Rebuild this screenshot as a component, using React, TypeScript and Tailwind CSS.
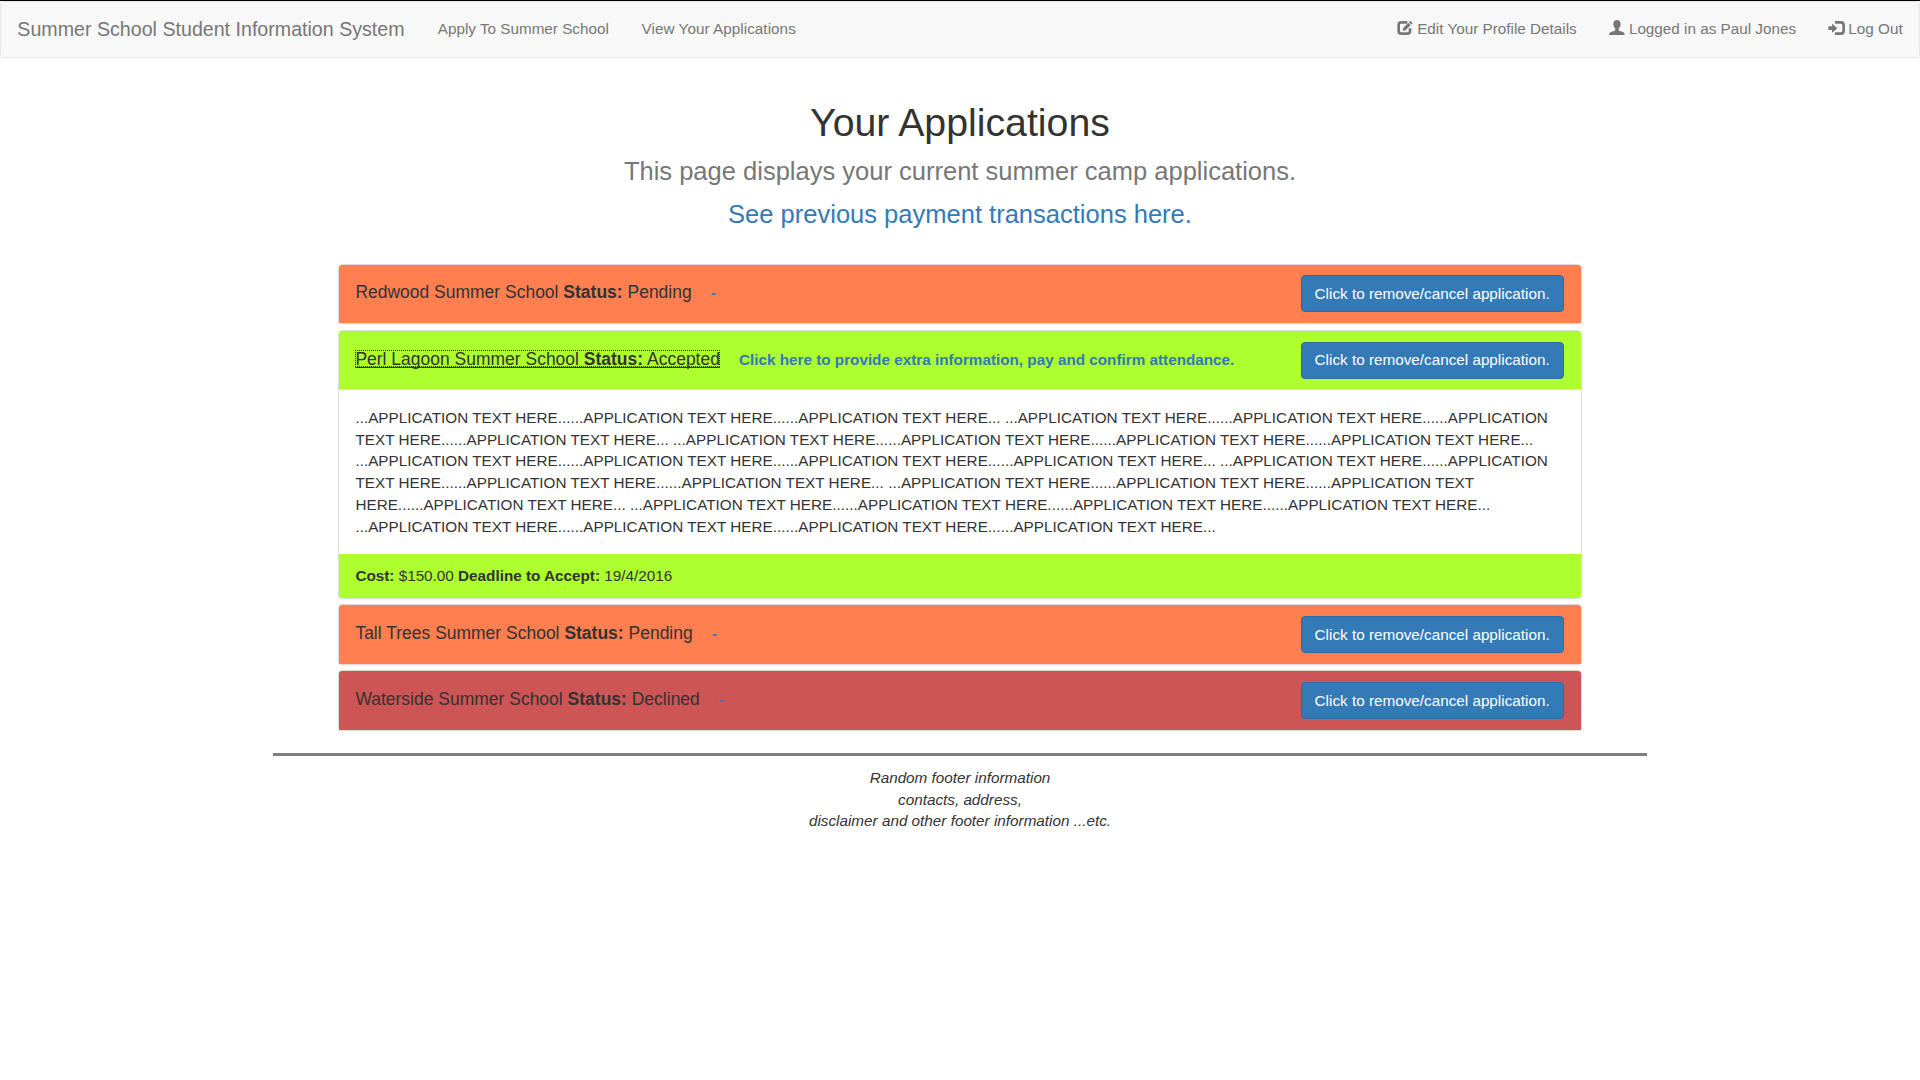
import React from "react";

const APP = "APPLICATION TEXT HERE";

const applicationLines = [
  `...${APP}......${APP}......${APP}... ...${APP}......${APP}......APPLICATION`,
  `TEXT HERE......${APP}... ...${APP}......${APP}......${APP}......${APP}...`,
  `...${APP}......${APP}......${APP}......${APP}... ...${APP}......APPLICATION`,
  `TEXT HERE......${APP}......${APP}... ...${APP}......${APP}......APPLICATION TEXT`,
  `HERE......${APP}... ...${APP}......${APP}......${APP}......${APP}...`,
  `...${APP}......${APP}......${APP}......${APP}...`,
];

function EditIcon() {
  return (
    <svg className="-ml-px h-4 w-4" viewBox="0 0 48 48" fill="none">
      <path
        d="M31 7H13Q5 7 5 15V33Q5 41 13 41H31Q39 41 39 33V25"
        stroke="currentColor"
        strokeWidth="8"
      />
      <path d="M17 33L18.500 24L34 8.500L41 15.500L25.500 31Z" fill="currentColor" />
      <path d="M36 6.500L40 2.500L47 9.500L43 13.500Z" fill="currentColor" />
    </svg>
  );
}

function UserIcon() {
  return (
    <svg className="h-4 w-4" viewBox="0 0 48 48" fill="currentColor">
      <path d="M24 0C31 0 35 5 35 12C35 18 32.500 22 29 26V29C29 32 33 33 40 35.500C45 37.500 47 40 47 45H0C0 40 3 37.500 8 35.500C15 33 19 32 19 29V26C15.500 22 13 18 13 12C13 5 17 0 24 0Z" />
    </svg>
  );
}

function LogInIcon() {
  return (
    <svg className="-ml-px h-4 w-[17px]" viewBox="0 0 51 48" fill="none">
      <path d="M1 19H12V11L28 24.500L12 38V30H1Z" fill="currentColor" />
      <path
        d="M21 7H38Q47 7 47 15V33Q47 41 38 41H21"
        stroke="currentColor"
        strokeWidth="8"
      />
    </svg>
  );
}

function NavItem({ icon, children }: { icon?: React.ReactNode; children: React.ReactNode }) {
  return (
    <a className="flex px-[16.36px] pt-4 text-[15.273px] leading-[22px] whitespace-nowrap">
      {icon && <span className="mt-[2px] h-4 w-[19.5px] shrink-0">{icon}</span>}
      {children}
    </a>
  );
}

function Navbar() {
  return (
    <nav className="flex h-[57px] justify-between rounded border border-[#e7e7e7] bg-[#f8f8f8] text-[#777]">
      <div className="flex">
        <a className="pr-[16.8px] pl-[16.36px] pt-4 text-[19.636px] leading-[22px] whitespace-nowrap">
          Summer School Student Information System
        </a>
        <NavItem>Apply To Summer School</NavItem>
        <NavItem>
          <span className="tracking-[0.04px]">View Your Applications</span>
        </NavItem>
      </div>
      <div className="flex">
        <NavItem icon={<EditIcon />}>Edit Your Profile Details</NavItem>
        <NavItem icon={<UserIcon />}>Logged in as Paul Jones</NavItem>
        <NavItem icon={<LogInIcon />}>Log Out</NavItem>
      </div>
    </nav>
  );
}

type PanelProps = {
  name: string;
  status: string;
  action: string;
  heading: string;
  titleOffset?: string;
  button?: string;
  focused?: boolean;
  children?: React.ReactNode;
};

function Panel({
  name,
  status,
  action,
  heading,
  titleOffset = "pt-[17px]",
  button = "mt-[11px] leading-[35px]",
  focused,
  children,
}: PanelProps) {
  return (
    <section className="rounded border border-[#ddd] bg-white shadow-[0_1px_1px_rgba(0,0,0,0.05)]">
      <div className={`flex items-start justify-between rounded-t-[3px] pr-[17.4px] pl-[16.4px] ${heading}`}>
        <h4 className={`text-[17.455px] leading-[22px] tracking-[0.025px] whitespace-nowrap ${titleOffset}`}>
          <span
            className={
              focused
                ? "relative underline decoration-1 underline-offset-[2px] [text-decoration-skip-ink:none]"
                : ""
            }
          >
            {name} <b>Status:</b> {status}
            {focused && (
              <span className="absolute inset-x-0 top-px bottom-[2px] border border-dotted border-[#222]" />
            )}
          </span>
          <a className="ml-[19px] text-[15.273px] font-bold tracking-normal text-[#337ab7]">{action}</a>
        </h4>
        <button
          className={`h-[37px] w-[263px] rounded border border-[#2e6da4] bg-[#337ab7] text-[15.273px] whitespace-nowrap text-white ${button}`}
        >
          Click to remove/cancel application.
        </button>
      </div>
      {children}
    </section>
  );
}

export default function App() {
  return (
    <div className="min-h-[1080px] border-t border-black bg-white font-['Liberation_Sans',Arial,sans-serif] text-[#333]">
      <Navbar />

      <header className="flex flex-col items-center pt-[43px] text-[25.527px] leading-[43px]">
        <h1 className="text-[39.273px] leading-[43px]">Your Applications</h1>
        <p className="mt-1.5 text-[#777]">This page displays your current summer camp applications.</p>
        <a className="text-[#337ab7]">See previous payment transactions here.</a>
      </header>

      <main className="mx-auto mt-7 flex w-[1244px] flex-col">
        <Panel
          name="Redwood Summer School"
          status="Pending"
          action="-"
          heading="h-[58px] bg-[#ff7f50]"
          titleOffset="pt-4"
          button="mt-[10px] leading-[35px]"
        />
        <div className="mt-1.5">
          <Panel
            name="Perl Lagoon Summer School"
            status="Accepted"
            action="Click here to provide extra information, pay and confirm attendance."
            heading="h-[58px] bg-[#adff2f]"
            button="mt-[11px] pb-0.5 leading-[33px]"
            focused
          >
            <div className="h-[165px] border-t border-[#ddd] px-[16.4px] pt-[16.7px] text-[15.273px] leading-[21.82px] tracking-[0.017px]">
              {applicationLines.map((line, i) => (
                <p key={i} className="whitespace-nowrap">
                  {line}
                </p>
              ))}
            </div>
            <div className="h-11 rounded-b-[3px] bg-[#adff2f] px-[16.4px] pt-[11px] text-[15.273px] leading-[22px]">
              <b>Cost:</b> $150.00 <b>Deadline to Accept:</b> 19/4/2016
            </div>
          </Panel>
        </div>
        <div className="mt-[5px]">
          <Panel name="Tall Trees Summer School" status="Pending" action="-" heading="h-[59px] bg-[#ff7f50]" />
        </div>
        <div className="mt-[5px]">
          <Panel name="Waterside Summer School" status="Declined" action="-" heading="h-[59px] bg-[#cd5555]" />
        </div>
      </main>

      <footer className="mx-auto mt-[22px] w-[1374px] border-t-[3px] border-[#808080] pt-[10.7px] text-center text-[15.273px] leading-[21.82px] italic">
        <p>Random footer information</p>
        <p>contacts, address,</p>
        <p>disclaimer and other footer information ...etc.</p>
      </footer>
    </div>
  );
}
